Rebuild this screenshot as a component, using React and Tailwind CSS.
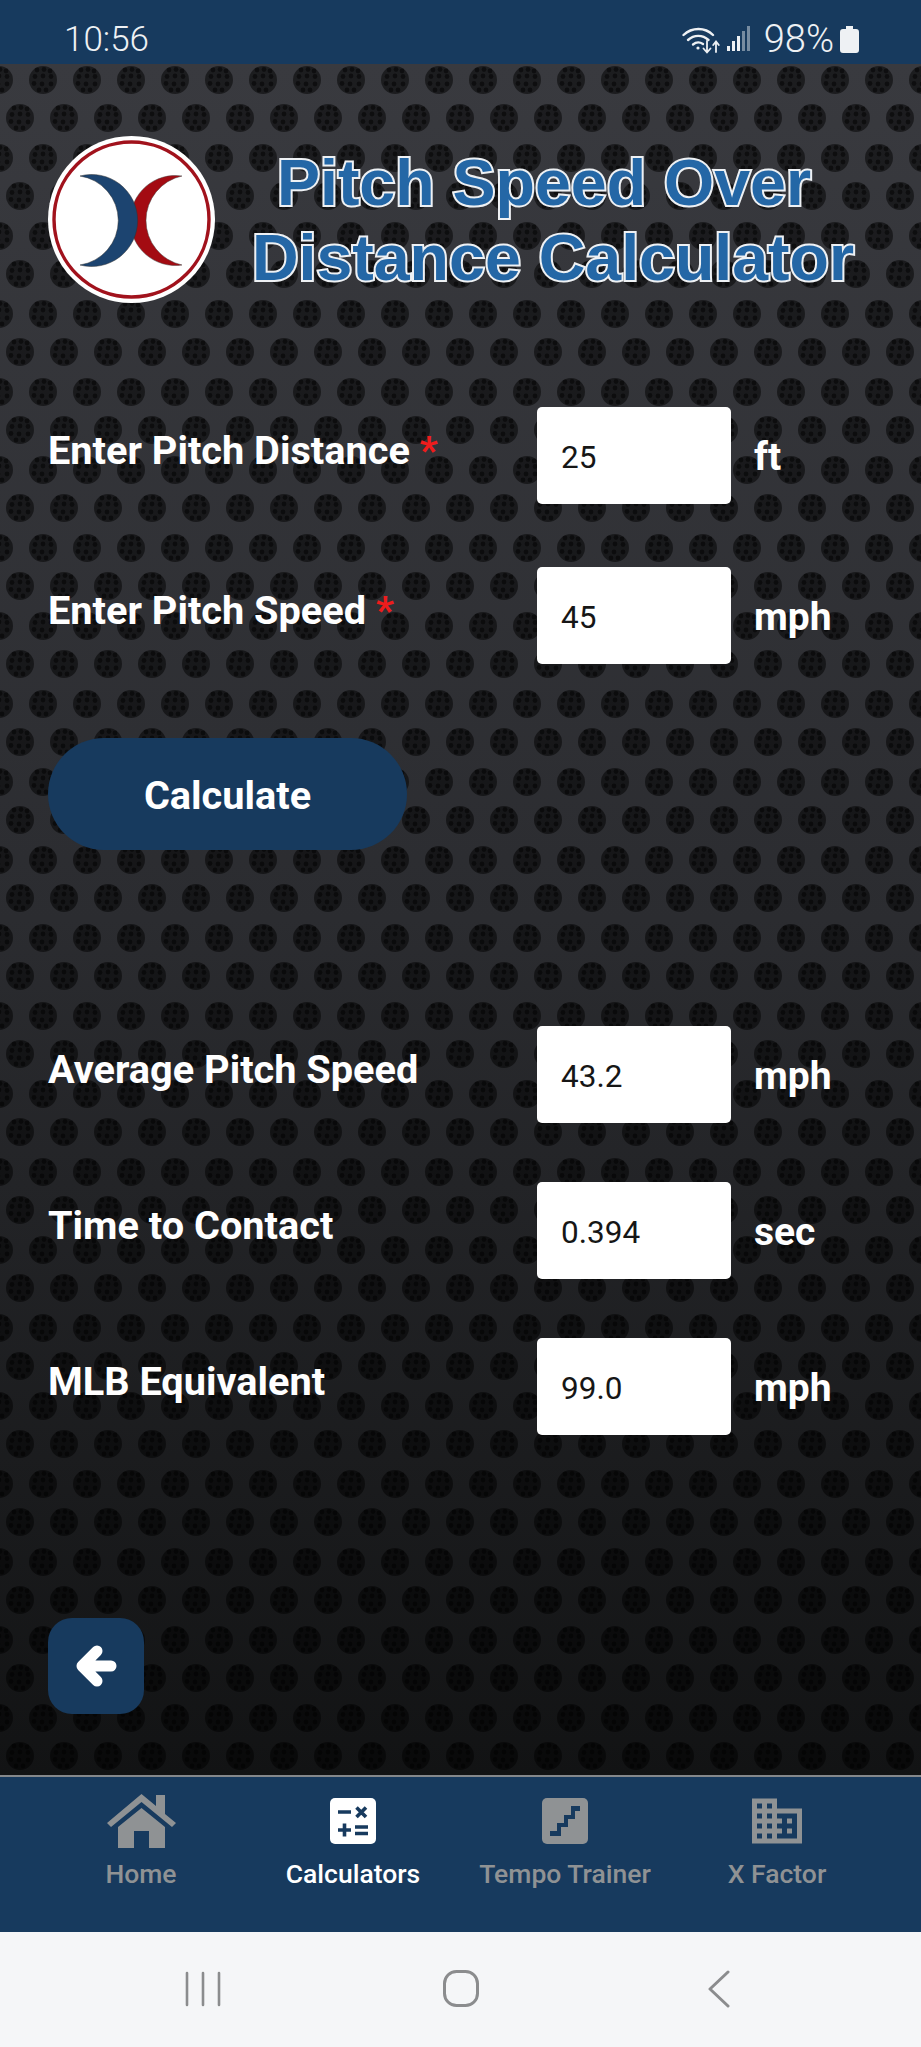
import React from "react";
import { MdDomain } from "react-icons/md";

function Holes() {
  const dots = [[-6,-10],[1,-10.5],[7,-9],[-8,-3.5],[0,-4],[8,-3.5],[-9,3.5],[-1,4],[8,4],[-4,10],[3,10]];
  const Hole = ({ x, y }) => (
    <g transform={`translate(${x} ${y})`} filter="url(#soft)">
      <circle r="14" fill="rgba(6,6,8,0.5)" />
      {dots.map(([a, b], i) => (
        <circle key={i} cx={a} cy={b} r="2.4" fill="rgba(0,0,0,0.5)" />
      ))}
    </g>
  );
  return (
    <svg className="absolute inset-0 h-full w-full" aria-hidden="true">
      <defs>
        <filter id="soft" x="-20%" y="-20%" width="140%" height="140%">
          <feGaussianBlur stdDeviation="0.6" />
        </filter>
        <pattern id="holes" width="44" height="78" patternUnits="userSpaceOnUse">
          <Hole x={-1} y={16} />
          <Hole x={43} y={16} />
          <Hole x={20} y={54} />
        </pattern>
      </defs>
      <rect width="100%" height="100%" fill="url(#holes)" />
    </svg>
  );
}

function Wifi() {
  return (
    <svg width="39" height="28" viewBox="0 0 39 28" fill="none" stroke="#eef1f4" strokeLinecap="round" aria-hidden="true">
      <path d="M1.5 9C10 1 23 1 31 9" strokeWidth="2.4" />
      <path d="M6 14C12 8.5 20.5 8.5 26.5 14" strokeWidth="2.4" />
      <path d="M11 18.5C14 16 18 16 21 18" strokeWidth="2.4" />
      <circle cx="16" cy="22" r="1.6" fill="#eef1f4" stroke="none" />
      <path d="M25 15V26M21.5 22.5L25 26.5L28.5 22.5" strokeWidth="1.8" />
      <path d="M34 26V16M31.2 19L34 15.5L36.8 19" strokeWidth="1.8" />
    </svg>
  );
}

function Signal() {
  const bars = [[0, 20, 1], [5, 15, 1], [10, 10, 1], [15, 5, 0.45], [20, 0, 0.45]];
  return (
    <svg width="24" height="26" viewBox="0 0 24 26" aria-hidden="true">
      {bars.map(([x, y, o]) => (
        <rect key={x} x={x} y={y} width="3" height={25 - y} fill="#eef1f4" opacity={o} />
      ))}
    </svg>
  );
}

function Battery() {
  return (
    <svg width="19" height="27" viewBox="0 0 19 27" aria-hidden="true">
      <path d="M6 0H13V3H16A3 3 0 0 1 19 6V24A3 3 0 0 1 16 27H3A3 3 0 0 1 0 24V6A3 3 0 0 1 3 3H6Z" fill="#eef1f4" />
    </svg>
  );
}

function Logo() {
  return (
    <svg width="167" height="167" viewBox="0 0 167 167" className="shrink-0" aria-hidden="true">
      <circle cx="83.5" cy="83.5" r="83.5" fill="#fff" />
      <circle cx="83.5" cy="83.5" r="77.5" fill="none" stroke="#a1121c" strokeWidth="3.4" />
      <path d="M134 40A45 45 0 1 0 134 129A45.5 45.5 0 0 1 134 40Z" fill="#a30b12" stroke="#444" strokeWidth="0.5" />
      <path d="M32 40A46 46 0 1 1 32 129A45 45 0 0 0 32 40Z" fill="#1c4470" stroke="#333" strokeWidth="0.5" />
    </svg>
  );
}

function Row({ label, req, value, unit, className }) {
  return (
    <div className={`flex items-start ${className}`}>
      <div className="w-[489px] shrink-0 pt-[22px] text-[39.7px] leading-[44px] font-bold text-white">
        {label}
        {req && <span className="text-[#ee1c1c]"> *</span>}
      </div>
      <input
        readOnly
        value={value}
        className="h-[97px] w-[194px] shrink-0 rounded-[5px] bg-white pt-[3px] pl-[24px] text-[31.5px] text-[#161616] outline-none"
      />
      <div className="ml-[23px] pt-[28px] text-[39px] leading-[44px] font-bold text-white">{unit}</div>
    </div>
  );
}

function NavItem({ label, active, children }) {
  return (
    <div className="flex flex-1 flex-col items-center">
      <div className="flex h-[60px] items-center justify-center">{children}</div>
      <div className={`mt-[7px] text-[26.5px] leading-[32px] font-medium ${active ? "text-white" : "text-[#8f9294]"}`}>{label}</div>
    </div>
  );
}

export default function App() {
  return (
    <div className="flex h-[2047px] w-[921px] flex-col overflow-hidden font-['Roboto',sans-serif]">
      <div className="flex h-[64px] shrink-0 items-start justify-between bg-[#173a5e] pt-[26px] pl-[64px] pr-[62px]">
        <div className="text-[35px] leading-[27px] font-light text-[#eef1f4]">10:56</div>
        <div className="flex items-start">
          <Wifi />
          <div className="ml-[6px]"><Signal /></div>
          <div className="ml-[13px] text-[38px] leading-[27px] font-light text-[#eef1f4]">98%</div>
          <div className="ml-[6px]"><Battery /></div>
        </div>
      </div>

      <div className="relative flex-1 bg-gradient-to-b from-[#393a3f] via-[#2b2c30] to-[#121314] pl-[48px]">
        <Holes />
        <div className="relative">
          <div className="flex items-start pt-[72px]">
            <Logo />
            <h1 className="ml-[35px] pt-[10px] w-[606px] text-center font-['Liberation_Sans',sans-serif] text-[64.5px] leading-[75px] font-bold text-[#2467a6] [-webkit-text-stroke:4px_#eef1f4] [paint-order:stroke_fill]">
              <span className="block pr-[18px]">Pitch Speed Over</span>
              <span className="block">Distance Calculator</span>
            </h1>
          </div>

          <Row className="mt-[104px]" label="Enter Pitch Distance" req value="25" unit="ft" />
          <Row className="mt-[63px]" label="Enter Pitch Speed" req value="45" unit="mph" />

          <div className="mt-[74px] flex h-[112px] w-[359px] items-center justify-center rounded-full bg-[#173a5e] pt-[3px] text-[39.7px] font-bold text-white">
            Calculate
          </div>

          <Row className="mt-[176px]" label="Average Pitch Speed" value="43.2" unit="mph" />
          <Row className="mt-[59px]" label="Time to Contact" value="0.394" unit="sec" />
          <Row className="mt-[59px]" label="MLB Equivalent" value="99.0" unit="mph" />

          <div className="mt-[183px] flex h-[96px] w-[96px] items-center justify-center rounded-[24px] bg-[#173a5e]">
            <svg width="42" height="44" viewBox="0 0 42 44" fill="none" stroke="#fff" strokeWidth="11" strokeLinecap="round" strokeLinejoin="round" aria-hidden="true">
              <path d="M36 22H8M22 7L7 22L22 37" />
            </svg>
          </div>
        </div>
      </div>

      <div className="flex h-[157px] shrink-0 border-t-2 border-[#85888b] bg-[#173a5e] pl-[35px] pr-[38px] pt-[14px]">
        <NavItem label="Home">
          <svg width="69" height="54" viewBox="0 0 69 54" fill="#8f9294" aria-hidden="true">
            <path d="M0 29L34.5 0L49 12V1H58V20L69 29L65 33L34.5 8L4 33Z" />
            <path d="M34.5 14L58 33V54H42V37H27V54H11V33Z" />
          </svg>
        </NavItem>
        <NavItem label="Calculators" active>
          <svg width="46" height="46" viewBox="0 0 46 46" aria-hidden="true">
            <rect width="46" height="46" rx="5" fill="#fff" />
            <g stroke="#173a5e" strokeWidth="3.6" fill="none">
              <path d="M8 14H21M26.500 9.500L36 19M36 9.500L26.500 19" />
              <path d="M8 32H21M14.500 25.500V38.500M25 29H38M25 35.500H38" />
            </g>
          </svg>
        </NavItem>
        <NavItem label="Tempo Trainer">
          <svg width="46" height="46" viewBox="0 0 46 46" aria-hidden="true">
            <rect width="46" height="46" rx="5" fill="#8f9294" />
            <path d="M8 33H15V25H22V17H29V8H38V13H33V21H26V29H19V38H8Z" fill="#173a5e" />
          </svg>
        </NavItem>
        <NavItem label="X Factor">
          <MdDomain size={60} color="#8f9294" />
        </NavItem>
      </div>

      <div className="flex h-[115px] shrink-0 items-center justify-center bg-[#f5f6f8] pb-[2px]">
        <div className="flex w-[258px] justify-center">
          <svg width="36" height="36" viewBox="0 0 36 36" stroke="#8b8c8e" strokeWidth="2.6" strokeLinecap="round" aria-hidden="true">
            <path d="M2 2V34M18 2V34M34 2V34" />
          </svg>
        </div>
        <div className="flex w-[258px] justify-center">
          <svg width="36" height="37" viewBox="0 0 36 37" fill="none" aria-hidden="true">
            <rect x="1.500" y="1.500" width="33" height="34" rx="12" stroke="#8b8c8e" strokeWidth="3" />
          </svg>
        </div>
        <div className="flex w-[258px] justify-center">
          <svg width="22" height="38" viewBox="0 0 22 38" fill="none" stroke="#8b8c8e" strokeWidth="3" strokeLinecap="round" strokeLinejoin="round" aria-hidden="true">
            <path d="M20 2L2 19L20 36" />
          </svg>
        </div>
      </div>
    </div>
  );
}
